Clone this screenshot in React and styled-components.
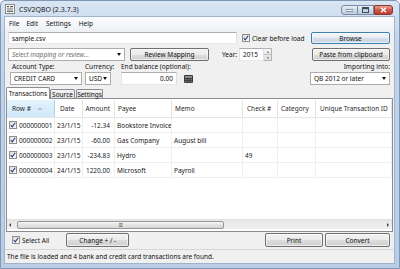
import React from 'react'
import styled, { createGlobalStyle, css } from 'styled-components'

const GlobalStyle = createGlobalStyle`
  html, body { margin: 0; padding: 0; background: #fff; }
  body {
    font-family: 'Noto Sans', 'Open Sans', sans-serif;
    font-size: 6.5px;
    color: #111;
  }
  * { box-sizing: border-box; }
`

const Window = styled.div`
  width: 400px;
  height: 269px;
  display: flex;
  flex-direction: column;
  background: linear-gradient(#d9e5f3, #c2d4ea 40px, #b9cde6);
  border: 1px solid #7f96b4;
  border-radius: 5px 5px 0 0;
  overflow: hidden;
`

const TitleBar = styled.div`
  height: 16px;
  display: flex;
  align-items: center;
  padding-left: 4px;
  color: #1b1b1b;
  font-size: 7px;
`

const TitleText = styled.span`
  margin-left: 4px;
`

const WinButtons = styled.div`
  margin-left: auto;
  margin-right: 6px;
  display: flex;
  align-self: flex-start;
  margin-top: 4px;
`

const WinBtn = styled.div`
  width: ${p => p.w}px;
  height: 10px;
  border: 1px solid ${p => (p.close ? '#8a3a36' : '#7a8ba3')};
  border-left-width: ${p => (p.first || p.close ? 1 : 0)}px;
  border-radius: ${p => (p.first ? '3px 0 0 3px' : p.close ? '0 3px 3px 0' : '0')};
  background: ${p => (p.close
    ? 'linear-gradient(#e4a293, #cf5a4a 50%, #c0392b)'
    : 'linear-gradient(#e9eff7, #cdd9e8 50%, #bccbde)')};
  display: flex;
  align-items: center;
  justify-content: center;
`

const Client = styled.div`
  flex: 1;
  margin: 0 5px 5px 4px;
  background: #f0f0f0;
  display: flex;
  flex-direction: column;
  box-shadow: 0 0 0 1px #9fb3cd;
`

const MenuBar = styled.div`
  height: 13px;
  display: flex;
  align-items: center;
  background: linear-gradient(#fbfcfe, #eef2f8);
  padding-left: 1px;
`

const MenuItem = styled.span`
  padding: 0 3px;
  margin-right: ${p => p.gap || 0}px;
`

const Row = styled.div`
  display: flex;
  align-items: ${p => p.align || 'center'};
  height: ${p => p.h}px;
  margin-top: ${p => p.mt || 0}px;
  padding: 0 4px 0 3px;
`

const TextBox = styled.div`
  width: ${p => p.w}px;
  height: 100%;
  margin-left: ${p => p.ml || 0}px;
  background: #fff;
  border: 1px solid #abadb3;
  border-left-color: #e2e3ea;
  border-right-color: #dbdfe6;
  border-bottom-color: #e3e9ef;
  display: flex;
  align-items: center;
  justify-content: ${p => (p.right ? 'flex-end' : 'flex-start')};
  padding: 0 3px;
  white-space: nowrap;
  overflow: hidden;
`

const Combo = styled.div`
  width: ${p => p.w}px;
  height: 100%;
  margin-left: ${p => p.ml || 0}px;
  background: #fff;
  border: 1px solid #acacac;
  display: flex;
  align-items: center;
  padding: 0 3px;
  white-space: nowrap;
  color: ${p => (p.placeholder ? '#6d6d6d' : '#111')};
  font-style: ${p => (p.placeholder ? 'italic' : 'normal')};
  &::after {
    content: '';
    margin-left: auto;
    border-left: 2.5px solid transparent;
    border-right: 2.5px solid transparent;
    border-top: 3px solid #111;
  }
`

const Button = styled.div`
  width: ${p => p.w}px;
  height: 100%;
  margin-left: ${p => (p.auto ? 'auto' : `${p.ml || 0}px`)};
  border: 1px solid ${p => (p.def ? '#3c7fb1' : '#707070')};
  border-radius: 2px;
  background: ${p => (p.def
    ? 'linear-gradient(#f4f7fa, #e6ecf2 50%, #d6dee8 51%, #cbd5e0)'
    : 'linear-gradient(#f2f2f2, #ebebeb 50%, #dddddd 51%, #cfcfcf)')};
  box-shadow: inset 0 0 0 1px rgba(255, 255, 255, 0.6);
  display: flex;
  align-items: center;
  justify-content: center;
  white-space: nowrap;
`

const CheckWrap = styled.div`
  display: flex;
  align-items: center;
  margin-left: ${p => p.ml || 0}px;
`

const Box = styled.span`
  width: 8px;
  height: 8px;
  border: 1px solid #8e8f8f;
  background: linear-gradient(135deg, #dcdcdc, #fbfbfb);
  display: inline-flex;
  align-items: center;
  justify-content: center;
  flex-shrink: 0;
  margin-right: 2px;
`

const Check = () => (
  <Box>
    <svg width="6" height="6" viewBox="0 0 6 6">
      <path d="M0.8 3.2 L2.3 4.8 L5.2 0.8" fill="none" stroke="#24407a" strokeWidth="1.1" />
    </svg>
  </Box>
)

const Spinner = styled.div`
  width: 8px;
  height: 100%;
  display: flex;
  flex-direction: column;
  border: 1px solid #b5b5b5;
  border-left: none;
  background: linear-gradient(#f3f3f3, #dedede);
`

const SpinHalf = styled.div`
  flex: 1;
  display: flex;
  align-items: center;
  justify-content: center;
  & + & { border-top: 1px solid #c4c4c4; }
  &::after {
    content: '';
    border-left: 1.5px solid transparent;
    border-right: 1.5px solid transparent;
    ${p => (p.up ? 'border-bottom: 2px solid #6d6d6d;' : 'border-top: 2px solid #6d6d6d;')}
  }
`

const Label = styled.span`
  margin-left: ${p => p.ml || 0}px;
  margin-right: ${p => p.mr || 0}px;
  white-space: nowrap;
`

const Field = styled.div`
  display: flex;
  flex-direction: column;
  width: ${p => p.w}px;
  margin-left: ${p => (p.auto ? 'auto' : `${p.ml || 0}px`)};
  height: 100%;
`

const FieldLabel = styled.div`
  height: 9px;
  line-height: 8px;
  white-space: nowrap;
  padding-left: ${p => p.pl || 0}px;
  text-align: ${p => (p.right ? 'right' : 'left')};
`

const FieldBody = styled.div`
  height: 13px;
  display: flex;
  align-items: center;
`

const Tabs = styled.div`
  display: flex;
  align-items: flex-end;
  height: 11px;
  margin-top: 2px;
  padding-left: 1px;
  position: relative;
  z-index: 1;
`

const Tab = styled.div`
  width: ${p => p.w}px;
  height: 9px;
  margin-right: ${p => p.mr || 0}px;
  border: 1px solid #898c95;
  border-bottom: none;
  border-radius: 2px 2px 0 0;
  display: flex;
  align-items: center;
  justify-content: center;
  white-space: nowrap;
  ${p => (p.active
    ? css`background: #fff; height: 12px; margin-bottom: -1px;`
    : css`background: linear-gradient(#f3f3f3, #e1e1e1);`)}
`

const Panel = styled.div`
  height: 134px;
  margin: 0 1px;
  border: 1px solid #898c95;
  background: #fff;
  display: flex;
  flex-direction: column;
  padding: 1px 0 2px;
`

const cols = '48px 28px 32px 57px 71px 35px 38px 1fr'

const HeaderRow = styled.div`
  display: grid;
  grid-template-columns: ${cols};
  height: 18px;
  border-bottom: 1px solid #e5e5e5;
`

const HeadCell = styled.div`
  display: flex;
  align-items: center;
  justify-content: ${p => (p.right ? 'flex-end' : 'flex-start')};
  padding: 0 ${p => (p.right ? 4 : 3)}px 0 ${p => p.pl || 3}px;
  border-right: 1px solid #e3e3e3;
  white-space: nowrap;
  color: #2a2a2a;
  background: ${p => (p.sorted ? 'linear-gradient(#e3f3fd, #cfe8fa)' : '#fff')};
  ${p => p.sorted && css`border-right-color: #a9d4f2;`}
`

const SortArrow = styled.span`
  margin-left: 6px;
  border-left: 3px solid transparent;
  border-right: 3px solid transparent;
  border-bottom: 3px solid #b8c6d6;
`

const DataRow = styled.div`
  display: grid;
  grid-template-columns: ${cols};
  height: 15px;
  border-bottom: 1px solid #f0f0f0;
`

const Cell = styled.div`
  display: flex;
  align-items: center;
  justify-content: ${p => (p.right ? 'flex-end' : 'flex-start')};
  padding: 0 ${p => (p.right ? 4 : 1)}px 0 ${p => p.pl || 2}px;
  border-right: 1px solid #efefef;
  white-space: nowrap;
  overflow: hidden;
  color: #1a1a1a;
`

const Spacer = styled.div`
  flex: 1;
`

const HScroll = styled.div`
  height: 10px;
  background: linear-gradient(#e6e6e6, #f0f0f0);
  border-top: 1px solid #e2e2e2;
  display: flex;
  align-items: center;
  padding: 0 3px 0 2px;
`

const Arrow = styled.span`
  border-top: 2px solid transparent;
  border-bottom: 2px solid transparent;
  ${p => (p.right
    ? 'border-left: 2px solid #444; margin-left: auto;'
    : 'border-right: 2px solid #444;')}
`

const Thumb = styled.div`
  width: 207px;
  height: 8px;
  margin-left: 6px;
  border: 1px solid #979797;
  border-radius: 2px;
  background: linear-gradient(#f5f5f5, #e3e3e3 50%, #d6d6d6);
  display: flex;
  align-items: center;
  justify-content: center;
  font-size: 5px;
  color: #555;
  letter-spacing: -0.5px;
`

const StatusBar = styled.div`
  height: 14px;
  margin-top: 2px;
  border-top: 1px solid #d7d7d7;
  display: flex;
  align-items: center;
  padding-left: 2px;
  background: #f0f0f0;
`

const AppIcon = () => (
  <svg width="10" height="10" viewBox="0 0 10 10">
    <rect x="0.5" y="0.5" width="9" height="9" fill="#f4f4f4" stroke="#8a8a8a" />
    <rect x="2" y="2" width="2" height="1.2" fill="#555" />
    <rect x="5" y="2" width="3" height="1.2" fill="#555" />
    <rect x="2" y="4.4" width="6" height="1" fill="#7a7a7a" />
    <rect x="2" y="6.6" width="6" height="1.2" fill="#555" />
  </svg>
)

const CalcIcon = () => (
  <svg width="9" height="8" viewBox="0 0 9 8" style={{ marginLeft: 7 }}>
    <rect x="0" y="0" width="9" height="8" rx="1" fill="#3b3b3b" />
    <rect x="1" y="1" width="7" height="2" fill="#8c8c8c" />
    <rect x="1" y="4" width="1.6" height="1.2" fill="#777" />
    <rect x="3.7" y="4" width="1.6" height="1.2" fill="#777" />
    <rect x="6.4" y="4" width="1.6" height="1.2" fill="#777" />
    <rect x="1" y="6" width="1.6" height="1.2" fill="#777" />
    <rect x="3.7" y="6" width="1.6" height="1.2" fill="#777" />
    <rect x="6.4" y="6" width="1.6" height="1.2" fill="#777" />
  </svg>
)

const rows = [
  { id: '000000001', date: '23/1/15', amount: '-12.34', payee: 'Bookstore Invoice', memo: '', check: '' },
  { id: '000000002', date: '23/1/15', amount: '-60.00', payee: 'Gas Company', memo: 'August bill', check: '' },
  { id: '000000003', date: '23/1/15', amount: '-234.83', payee: 'Hydro', memo: '', check: '49' },
  { id: '000000004', date: '24/1/15', amount: '1220.00', payee: 'Microsoft', memo: 'Payroll', check: '' }
]

export default function App () {
  return (
    <>
      <GlobalStyle />
      <Window>
        <TitleBar>
          <AppIcon />
          <TitleText>CSV2QBO (2.3.7.3)</TitleText>
          <WinButtons>
            <WinBtn w={17} first>
              <svg width="7" height="3"><rect x="0" y="0.5" width="7" height="2" fill="#fff" stroke="#4a5a70" strokeWidth="0.6" /></svg>
            </WinBtn>
            <WinBtn w={16}>
              <svg width="7" height="6"><rect x="0.5" y="0.5" width="6" height="5" fill="none" stroke="#3c4a5e" strokeWidth="1" /><rect x="1" y="1" width="5" height="1.2" fill="#3c4a5e" /></svg>
            </WinBtn>
            <WinBtn w={19} close>
              <svg width="7" height="6"><path d="M1 0.8 L6 5.2 M6 0.8 L1 5.2" stroke="#fff" strokeWidth="1.4" /></svg>
            </WinBtn>
          </WinButtons>
        </TitleBar>
        <Client>
          <MenuBar>
            <MenuItem gap={1}>File</MenuItem>
            <MenuItem gap={2}>Edit</MenuItem>
            <MenuItem gap={2}>Settings</MenuItem>
            <MenuItem>Help</MenuItem>
          </MenuBar>

          <Row h={12} mt={2}>
            <TextBox w={229}>sample.csv</TextBox>
            <CheckWrap ml={5}>
              <Check />
              <Label>Clear before load</Label>
            </CheckWrap>
            <Button w={79} auto def>Browse</Button>
          </Row>

          <Row h={13} mt={4}>
            <Combo w={117} placeholder>Select mapping or review...</Combo>
            <Button w={79} ml={5}>Review Mapping</Button>
            <Label ml={13} mr={2}>Year:</Label>
            <TextBox w={25}>2015</TextBox>
            <Spinner>
              <SpinHalf up />
              <SpinHalf />
            </Spinner>
            <Button w={78} auto>Paste from clipboard</Button>
          </Row>

          <Row h={22} mt={2} align="stretch">
            <Field w={72} ml={2}>
              <FieldLabel pl={2}>Account Type:</FieldLabel>
              <FieldBody><Combo w={72}>CREDIT CARD</Combo></FieldBody>
            </Field>
            <Field w={26} ml={3}>
              <FieldLabel>Currency:</FieldLabel>
              <FieldBody><Combo w={26}>USD</Combo></FieldBody>
            </Field>
            <Field w={74} ml={10}>
              <FieldLabel>End balance (optional):</FieldLabel>
              <FieldBody>
                <TextBox w={56} right>0.00</TextBox>
                <CalcIcon />
              </FieldBody>
            </Field>
            <Field w={80} auto>
              <FieldLabel right>Importing into:</FieldLabel>
              <FieldBody><Combo w={80}>QB 2012 or later</Combo></FieldBody>
            </Field>
          </Row>

          <Tabs>
            <Tab w={44} active>Transactions</Tab>
            <Tab w={25} mr={1}>Source</Tab>
            <Tab w={27}>Settings</Tab>
          </Tabs>
          <Panel>
            <HeaderRow>
              <HeadCell sorted pl={5}>Row #<SortArrow /></HeadCell>
              <HeadCell pl={5}>Date</HeadCell>
              <HeadCell right>Amount</HeadCell>
              <HeadCell>Payee</HeadCell>
              <HeadCell>Memo</HeadCell>
              <HeadCell pl={4}>Check #</HeadCell>
              <HeadCell>Category</HeadCell>
              <HeadCell pl={4}>Unique Transaction ID</HeadCell>
            </HeaderRow>
            {rows.map(r => (
              <DataRow key={r.id}>
                <Cell><Check />{r.id}</Cell>
                <Cell>{r.date}</Cell>
                <Cell right>{r.amount}</Cell>
                <Cell>{r.payee}</Cell>
                <Cell>{r.memo}</Cell>
                <Cell>{r.check}</Cell>
                <Cell />
                <Cell />
              </DataRow>
            ))}
            <Spacer />
            <HScroll>
              <Arrow />
              <Thumb>III</Thumb>
              <Arrow right />
            </HScroll>
          </Panel>

          <Row h={14} mt={1}>
            <CheckWrap ml={4}>
              <Check />
              <Label>Select All</Label>
            </CheckWrap>
            <Button w={63} ml={17}>Change + / -</Button>
            <Button w={58} auto>Print</Button>
            <Button w={65} ml={2}>Convert</Button>
          </Row>

          <StatusBar>The file is loaded and 4 bank and credit card transactions are found.</StatusBar>
        </Client>
      </Window>
    </>
  )
}
